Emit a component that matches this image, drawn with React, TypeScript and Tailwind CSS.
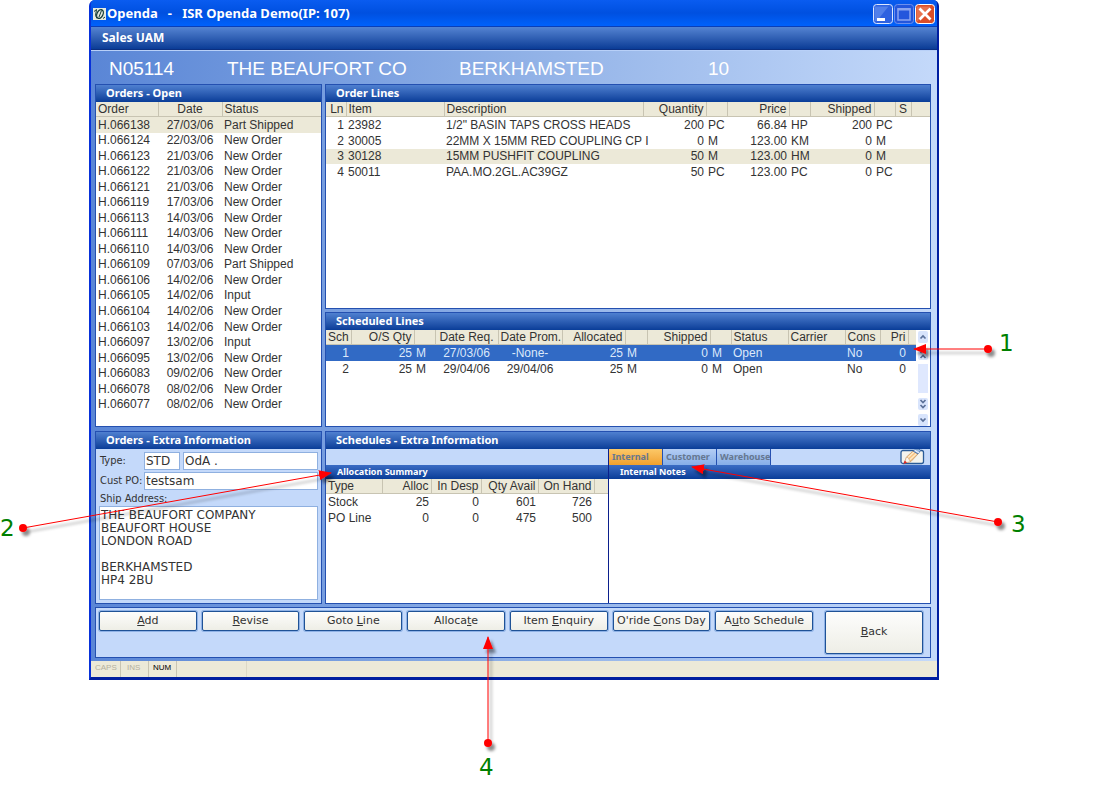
import type { ReactNode } from "react";

type Align = "left" | "center" | "right";

interface Column {
  label: string;
  width: string;
  align?: Align;
  pad?: string;
}

interface GridProps {
  label: string;
  columns: Column[];
  rows: string[][];
  height: string;
  rowClass?: (index: number) => string;
}

const alignClass: Record<Align, string> = {
  left: "text-left",
  center: "text-center",
  right: "text-right",
};

const orders = [
  ["H.066138", "27/03/06", "Part Shipped"],
  ["H.066124", "22/03/06", "New Order"],
  ["H.066123", "21/03/06", "New Order"],
  ["H.066122", "21/03/06", "New Order"],
  ["H.066121", "21/03/06", "New Order"],
  ["H.066119", "17/03/06", "New Order"],
  ["H.066113", "14/03/06", "New Order"],
  ["H.066111", "14/03/06", "New Order"],
  ["H.066110", "14/03/06", "New Order"],
  ["H.066109", "07/03/06", "Part Shipped"],
  ["H.066106", "14/02/06", "New Order"],
  ["H.066105", "14/02/06", "Input"],
  ["H.066104", "14/02/06", "New Order"],
  ["H.066103", "14/02/06", "New Order"],
  ["H.066097", "13/02/06", "Input"],
  ["H.066095", "13/02/06", "New Order"],
  ["H.066083", "09/02/06", "New Order"],
  ["H.066078", "08/02/06", "New Order"],
  ["H.066077", "08/02/06", "New Order"],
];

const orderColumns: Column[] = [
  { label: "Order", width: "w-[62px]" },
  { label: "Date", width: "w-[64px]", align: "center" },
  { label: "Status", width: "w-auto" },
];

const orderLines = [
  ["1", "23982", '1/2" BASIN TAPS CROSS HEADS', "200", "PC", "66.84", "HP", "200", "PC", "", ""],
  ["2", "30005", "22MM X 15MM RED COUPLING CP I", "0", "M", "123.00", "KM", "0", "M", "", ""],
  ["3", "30128", "15MM PUSHFIT COUPLING", "50", "M", "123.00", "HM", "0", "M", "", ""],
  ["4", "50011", "PAA.MO.2GL.AC39GZ", "50", "PC", "123.00", "PC", "0", "PC", "", ""],
];

const orderLineColumns: Column[] = [
  { label: "Ln", width: "w-[20px]", align: "right" },
  { label: "Item", width: "w-[98px]" },
  { label: "Description", width: "w-[199px]" },
  { label: "Quantity", width: "w-[63px]", align: "right" },
  { label: "", width: "w-[21px]" },
  { label: "Price", width: "w-[62px]", align: "right" },
  { label: "", width: "w-[21px]" },
  { label: "Shipped", width: "w-[64px]", align: "right" },
  { label: "", width: "w-[21px]" },
  { label: "S", width: "w-[16px]", align: "center" },
  { label: "", width: "w-auto" },
];

const schedules = [
  ["1", "25", "M", "27/03/06", "-None-", "25", "M", "0", "M", "Open", "", "No", "0", ""],
  ["2", "25", "M", "29/04/06", "29/04/06", "25", "M", "0", "M", "Open", "", "No", "0", ""],
];

const scheduleColumns: Column[] = [
  { label: "Sch", width: "w-[25px]", align: "right" },
  { label: "O/S Qty", width: "w-[63px]", align: "right" },
  { label: "", width: "w-[21px]" },
  { label: "Date Req.", width: "w-[63px]", align: "center" },
  { label: "Date Prom.", width: "w-[64px]", align: "center" },
  { label: "Allocated", width: "w-[63px]", align: "right" },
  { label: "", width: "w-[22px]" },
  { label: "Shipped", width: "w-[63px]", align: "right" },
  { label: "", width: "w-[21px]" },
  { label: "Status", width: "w-[57px]" },
  { label: "Carrier", width: "w-[57px]" },
  { label: "Cons", width: "w-[35px]" },
  { label: "Pri", width: "w-[28px]", align: "right" },
  { label: "", width: "w-auto" },
];

const allocations = [
  ["Stock", "25", "0", "601", "726", ""],
  ["PO Line", "0", "0", "475", "500", ""],
];

const allocationColumns: Column[] = [
  { label: "Type", width: "w-[56px]" },
  { label: "Alloc", width: "w-[49px]", align: "right" },
  { label: "In Desp", width: "w-[50px]", align: "right" },
  { label: "Qty Avail", width: "w-[57px]", align: "right" },
  { label: "On Hand", width: "w-[56px]", align: "right" },
  { label: "", width: "w-auto" },
];

// text before, the underlined shortcut key, text after
const actions = [
  ["", "A", "dd"],
  ["", "R", "evise"],
  ["Goto ", "L", "ine"],
  ["Alloca", "t", "e"],
  ["Item ", "E", "nquiry"],
  ["O'ride ", "C", "ons Day"],
  ["A", "u", "to Schedule"],
];

const DataGrid = ({ label, columns, rows, height, rowClass }: GridProps) => (
  <table
    aria-label={label}
    className={`w-full table-fixed border-collapse text-xs leading-[14px] text-[#333] ${height}`}
  >
    <thead className="bg-[#ece9d8]">
      <tr>
        {columns.map((column, i) => (
          <th
            key={i}
            className={`border-r border-b border-[#c8c4b2] p-0 font-normal whitespace-nowrap last:border-r-0 ${column.pad ?? "px-[2px]"} ${column.width} ${alignClass[column.align ?? "left"]}`}
          >
            {column.label}
          </th>
        ))}
      </tr>
    </thead>
    <tbody>
      {rows.map((row, r) => (
        <tr key={r} className={rowClass?.(r)}>
          {row.map((cell, c) => (
            <td
              key={c}
              className={`p-0 whitespace-nowrap ${columns[c].pad ?? "px-[2px]"} ${alignClass[columns[c].align ?? "left"]}`}
            >
              {cell}
            </td>
          ))}
        </tr>
      ))}
    </tbody>
  </table>
);

const PanelTitle = ({ children }: { children: ReactNode }) => (
  <h2 className="h-[17px] shrink-0 bg-linear-to-b from-[#4f80d0] to-[#093d98] pl-[10px] font-['Noto_Sans',sans-serif] text-[11px] leading-4 font-bold text-white">
    {children}
  </h2>
);

const Panel = ({
  title,
  className = "",
  children,
}: {
  title: string;
  className?: string;
  children: ReactNode;
}) => (
  <section className={`flex min-w-0 flex-col border border-[#2450b0] ${className}`}>
    <PanelTitle>{title}</PanelTitle>
    {children}
  </section>
);

const AppIcon = () => (
  <svg width="13" height="12" viewBox="0 0 13 12" aria-hidden="true">
    <rect width="13" height="12" fill="#e6eadf" />
    <ellipse cx="7" cy="6" rx="3" ry="4.600" transform="rotate(25 7 6)" fill="none" stroke="#143c36" strokeWidth="1.300" />
    <path d="M1 3.500 3.500 1.500 2.500 7.500 4 10.500M6 9 8.500 2.500M10 10.500l2-1.500" fill="none" stroke="#143c36" />
  </svg>
);

const WindowButtons = () => (
  <div className="flex gap-px">
    <button aria-label="Minimize" className="h-5">
      <svg width="20" height="20" viewBox="0 0 20 20">
        <rect x=".5" y=".5" width="19" height="19" rx="3" fill="#2f62e0" stroke="#dce7ff" />
        <path d="M1.500 2.500h14Q10 9 4 17H1.500z" fill="#6b94f0" opacity=".6" />
        <rect x="4" y="14" width="8" height="3" fill="#fff" />
      </svg>
    </button>
    <button aria-label="Maximize" className="h-5">
      <svg width="20" height="20" viewBox="0 0 20 20">
        <rect x=".5" y=".5" width="19" height="19" rx="3" fill="#2456dc" stroke="#6d90ee" />
        <path d="M4 5h12v11H4z" fill="none" stroke="#8ba4ef" strokeWidth="1.500" />
        <path d="M3.500 4h13v2.500h-13z" fill="#8ba4ef" />
      </svg>
    </button>
    <button aria-label="Close" className="h-5">
      <svg width="20" height="20" viewBox="0 0 20 20">
        <rect x=".5" y=".5" width="19" height="19" rx="3" fill="#dc4e28" stroke="#fff" />
        <path d="M1.500 2.500h14Q8 8 3 17H1.500z" fill="#f08a68" opacity=".6" />
        <path d="m4.500 4.500 11 11m0-11-11 11" stroke="#fff" strokeWidth="2.800" />
      </svg>
    </button>
  </div>
);

const EditIcon = () => (
  <svg width="25" height="16" viewBox="0 0 25 16" aria-hidden="true">
    <rect x="1" y="1.500" width="22.500" height="13" rx="2" fill="#f4f4ee" stroke="#2a5c98" strokeWidth="1.300" />
    <path d="m4.500 14 2-6L13 2l5 3-7 7.500z" fill="#f8c384" stroke="#b98a55" strokeWidth=".6" />
    <path d="m8 8.500 6.500-6M9.500 11l7-6.500" stroke="#fdeccb" strokeWidth="1.200" />
    <path d="m4.500 14 2-6 2 1 .8 2.200 1.700 1.300z" fill="#fdf6ec" stroke="#b98a55" strokeWidth=".4" />
    <path d="m3.500 15 1.200-3.500 2.300 2z" fill="#e02424" />
    <path d="m13 2 2.500-2H19l1.500 1.500L18 5z" fill="#9dbbe2" stroke="#3d66a0" strokeWidth=".8" />
    <path d="m14.500 1 4.500 3" stroke="#f4f8ff" />
  </svg>
);

const Chevron = ({ up, double }: { up?: boolean; double?: boolean }) => (
  <svg width="10" height="12" viewBox="0 0 10 12" className={up ? "rotate-180" : ""}>
    <rect width="10" height="12" rx="2" fill="#d8e4fc" />
    <path
      d={double ? "m2.500 2 2.500 2.500L7.500 2M2.500 7 5 9.500 7.500 7" : "m2.500 4.500 2.500 2.500 2.500-2.500"}
      fill="none"
      stroke="#5a7099"
      strokeWidth="1.700"
    />
  </svg>
);

const ScrollBar = () => (
  <div className="flex w-[14px] shrink-0 flex-col items-center justify-between bg-white pt-px">
    <button aria-label="Line up" className="h-3"><Chevron up /></button>
    <button aria-label="Page up" className="h-3"><Chevron up double /></button>
    <div className="h-[29px] w-[10px] bg-[#dfe8fe]" />
    <button aria-label="Page down" className="h-3"><Chevron double /></button>
    <button aria-label="Line down" className="h-3"><Chevron /></button>
  </div>
);

const fieldClass =
  "min-w-0 border border-[#8fb0e0] bg-white px-px font-['DejaVu_Sans',sans-serif] text-xs text-[#333]";

const OrderExtra = () => (
  <div className="flex flex-1 flex-col bg-[#c4d9fa] p-[3px] font-['DejaVu_Sans_Condensed','DejaVu_Sans',sans-serif] text-[11px] text-[#333]">
    <div className="flex items-center">
      <label htmlFor="type" className="w-[45px] shrink-0 pl-px">Type:</label>
      <input id="type" defaultValue="STD" className={`h-[18px] w-[36px] ${fieldClass}`} />
      <input aria-label="Type description" defaultValue="OdA ." className={`ml-[3px] h-[18px] flex-1 ${fieldClass}`} />
    </div>
    <div className="mt-[2px] flex items-center">
      <label htmlFor="po" className="w-[45px] shrink-0 pl-px whitespace-nowrap">Cust PO:</label>
      <input id="po" defaultValue="testsam" className={`h-[18px] flex-1 ${fieldClass}`} />
    </div>
    <label htmlFor="address" className="h-[16px] pl-px leading-[18px]">Ship Address:</label>
    <textarea
      id="address"
      defaultValue={"THE BEAUFORT COMPANY\nBEAUFORT HOUSE\nLONDON ROAD\n\nBERKHAMSTED\nHP4 2BU"}
      className={`flex-1 resize-none overflow-hidden pt-[2px] leading-[13px] ${fieldClass}`}
    />
  </div>
);

const tabClass =
  "w-[54px] border-r border-[#2450b0] pl-[3px] text-left text-[9px] leading-[14px] font-bold text-[#66778f]";
const subTitleClass =
  "h-[14px] bg-linear-to-b from-[#3a6cc4] to-[#093d98] pl-[11px] text-[9px] leading-[13px] font-bold text-white";

const ScheduleExtra = () => (
  <div className="flex flex-1 font-['Noto_Sans',sans-serif]">
    <div className="flex w-[283px] flex-col border-r border-[#0b1f8c]">
      <div className="h-4 bg-[#c4d9fa]" />
      <h3 className={subTitleClass}>Allocation Summary</h3>
      <div className="flex-1 bg-white font-['Liberation_Sans',Arial,sans-serif]">
        <DataGrid label="Allocation summary" columns={allocationColumns} rows={allocations} height="h-[47px]" />
      </div>
    </div>
    <div className="flex min-w-0 flex-1 flex-col">
      <div className="flex h-4 justify-between bg-[#c4d9fa] pr-[5px]">
        <div role="tablist" className="flex">
          <button role="tab" aria-selected="true" className={`bg-linear-to-b from-[#fcc867] to-[#f0a02c] ${tabClass}`}>Internal</button>
          <button role="tab" aria-selected="false" className={`bg-linear-to-b from-[#b4cdf4] to-[#86aee8] ${tabClass}`}>Customer</button>
          <button role="tab" aria-selected="false" className={`bg-linear-to-b from-[#b4cdf4] to-[#86aee8] ${tabClass}`}>Warehouse</button>
        </div>
        <button aria-label="Edit notes"><EditIcon /></button>
      </div>
      <h3 className={subTitleClass}>Internal Notes</h3>
      <div className="flex-1 bg-white" />
    </div>
  </div>
);

const buttonClass =
  "rounded-[2px] border border-[#1f5296] bg-linear-to-b from-[#fdfdfc] to-[#eeeee6] font-['DejaVu_Sans',sans-serif] text-[11px] whitespace-nowrap text-[#333] shadow-[0_0_0_1px_#8fb2e6]";

const ActionBar = () => (
  <div className="mt-[3px] flex h-[51px] items-start border border-[#2450b0] bg-[#c4d9fa] py-[3px] pr-[7px] pl-[3px]">
    <div className="flex flex-1 gap-[5px]">
      {actions.map(([before, key, after]) => (
        <button key={before + key + after} className={`h-5 min-w-0 flex-1 leading-[18px] ${buttonClass}`}>
          {before}
          <u>{key}</u>
          {after}
        </button>
      ))}
    </div>
    <button className={`ml-3 h-[43px] w-[98px] ${buttonClass}`}>
      <u>B</u>ack
    </button>
  </div>
);

const StatusBar = () => (
  <footer className="mt-[3px] flex h-4 bg-[#ece9d8] text-[8px] leading-[14px] text-[#b4b09e]">
    <span className="w-[30px] border-r border-[#c8c4b2] pl-1">CAPS</span>
    <span className="w-[28px] border-r border-[#c8c4b2] pl-[6px]">INS</span>
    <span className="w-[28px] border-r border-[#c8c4b2] pl-1 text-black">NUM</span>
    <span className="w-[70px] border-r border-[#dcd8c6]" />
  </footer>
);

const callouts = [
  { n: 1, dot: [988, 349], tip: [914, 349], text: [999, 351] },
  { n: 2, dot: [23, 528], tip: [331, 473], text: [0, 536] },
  { n: 3, dot: [998, 522], tip: [692, 467], text: [1011, 532] },
  { n: 4, dot: [488, 743], tip: [488, 637], text: [479, 775] },
];

// numbered red pointers that lie over the window
const Callouts = () => (
  <svg width="1111" height="812" className="pointer-events-none absolute top-0 left-0">
    <defs>
      <filter id="soft" x="0" y="0" width="1111" height="812" filterUnits="userSpaceOnUse">
        <feDropShadow dx="3" dy="4" stdDeviation="1.500" floodColor="#000" floodOpacity=".45" />
      </filter>
      <marker id="arrow" markerUnits="userSpaceOnUse" markerWidth="13" markerHeight="10" refX="12" refY="5" orient="auto">
        <path d="M0 0 13 5 0 10z" fill="red" />
      </marker>
    </defs>
    {callouts.map(({ n, dot, tip, text }) => (
      <g key={n}>
        <g filter="url(#soft)">
          <line x1={dot[0]} y1={dot[1]} x2={tip[0]} y2={tip[1]} stroke="red" markerEnd="url(#arrow)" />
          <circle cx={dot[0]} cy={dot[1]} r="4" fill="red" />
        </g>
        <text x={text[0]} y={text[1]} fill="#008000" className="font-['DejaVu_Sans',sans-serif] text-[23px]">
          {n}
        </text>
      </g>
    ))}
  </svg>
);

const App = () => (
  <div className="relative min-h-screen bg-white font-['Liberation_Sans',Arial,sans-serif]">
    <main className="mr-[172px] ml-[89px] rounded-t-md border-x-2 border-b-[3px] border-x-[#0831d9] border-r-[#001ea0] border-b-[#001ea0] bg-[#0055e5]">
      <header className="flex h-[26px] items-center justify-between rounded-t bg-linear-to-b from-[#0a5cf0] via-[#0050e0] to-[#0062fc] px-[2px] pt-[2px]">
        <div className="flex items-center gap-px">
          <AppIcon />
          <h1 className="font-['Noto_Sans',sans-serif] text-[13px] font-bold whitespace-pre text-white">
            {"Openda   -   ISR Openda Demo(IP: 107)"}
          </h1>
        </div>
        <WindowButtons />
      </header>
      <nav className="h-6 border-y border-t-[#0a3fb8] border-b-[#0b2f80] bg-linear-to-b from-[#5584d2] to-[#0a3c96] pl-[11px] font-['Noto_Sans',sans-serif] text-xs leading-[22px] font-bold text-white">
        Sales UAM
      </nav>
      <div className="border-t border-[#b8d0f8] bg-linear-to-r from-[#5a86d6] via-[#8fb0e6] to-[#c4d9fa]">
        <div className="flex h-[33px] items-center pt-[3px] pl-[18px] text-[19px] text-white">
          <span className="w-[118px]">N05114</span>
          <span className="w-[232px]">THE BEAUFORT CO</span>
          <span className="w-[249px]">BERKHAMSTED</span>
          <span>10</span>
        </div>
        <div className="pr-[6px] pl-1">
          <div className="flex gap-[3px]">
            <div className="flex w-[227px] shrink-0 flex-col gap-1">
              <Panel title="Orders - Open" className="h-[343px] bg-white">
                <DataGrid
                  label="Open orders"
                  columns={orderColumns}
                  rows={orders}
                  height="h-[310px]"
                  rowClass={(i) => (i === 0 ? "bg-[#ece9d8]" : "")}
                />
              </Panel>
              <Panel title="Orders - Extra Information" className="h-[173px]">
                <OrderExtra />
              </Panel>
            </div>
            <div className="flex min-w-0 flex-1 flex-col">
              <Panel title="Order Lines" className="h-[225px] bg-white">
                <DataGrid
                  label="Order lines"
                  columns={orderLineColumns}
                  rows={orderLines}
                  height="h-[78px]"
                  rowClass={(i) => (i === 2 ? "bg-[#ece9d8]" : "")}
                />
              </Panel>
              <Panel title="Scheduled Lines" className="mt-[3px] h-[115px] bg-white">
                <div className="flex flex-1">
                  <div className="min-w-0 flex-1">
                    <DataGrid
                      label="Scheduled lines"
                      columns={scheduleColumns}
                      rows={schedules}
                      height="h-[47px]"
                      rowClass={(i) => (i === 0 ? "bg-[#316ac5] text-[#dce8fa]" : "")}
                    />
                  </div>
                  <ScrollBar />
                </div>
              </Panel>
              <Panel title="Schedules - Extra Information" className="mt-1 h-[173px]">
                <ScheduleExtra />
              </Panel>
            </div>
          </div>
          <ActionBar />
        </div>
        <StatusBar />
      </div>
    </main>
    <Callouts />
  </div>
);

export default App;
